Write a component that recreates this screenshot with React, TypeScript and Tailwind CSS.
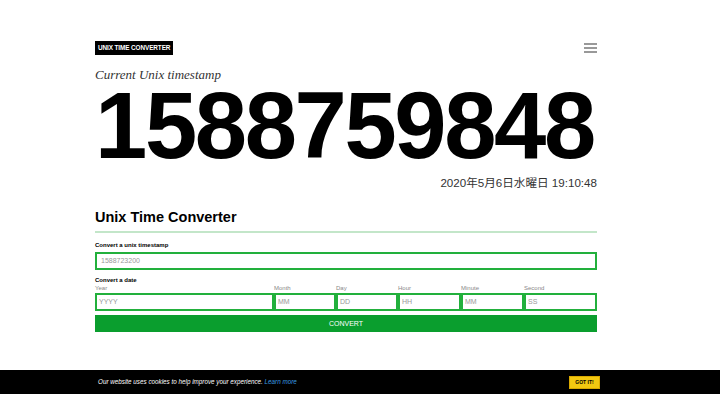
import { useState } from 'react'

const FIELDS = [
  { label: 'Year', placeholder: 'YYYY', width: 'w-[179px]' },
  { label: 'Month', placeholder: 'MM', width: 'w-[62px]' },
  { label: 'Day', placeholder: 'DD', width: 'w-[62px]' },
  { label: 'Hour', placeholder: 'HH', width: 'w-[63px]' },
  { label: 'Minute', placeholder: 'MM', width: 'w-[63px]' },
  { label: 'Second', placeholder: 'SS', width: 'flex-1' },
]

export default function App() {
  const [stamp, setStamp] = useState('')

  return (
    <div className="relative h-[394px] w-[720px] overflow-hidden bg-white font-['Liberation_Sans',Arial,sans-serif] text-black">
      <div className="ml-[95px] w-[502px] pt-[41px]">
        <header className="flex items-start justify-between">
          <div className="flex h-[14px] items-center bg-black px-[3px] text-[6.4px] font-bold leading-none tracking-[-0.1px] text-white">
            UNIX TIME CONVERTER
          </div>
          <button className="mt-[2px] flex w-[13px] flex-col gap-[2px]" aria-label="Menu">
            <span className="h-[2px] w-full bg-[#999]" />
            <span className="h-[2px] w-full bg-[#999]" />
            <span className="h-[2px] w-full bg-[#999]" />
          </button>
        </header>

        <p className="mt-[13px] font-['Liberation_Serif',serif] text-[13px] italic leading-[13px] text-[#333]">
          Current Unix timestamp
        </p>

        <div className="mt-[10px] text-[94px] font-bold leading-[70px] tracking-[-2.4px]">1588759848</div>

        <p className="mt-[16px] text-right font-['Liberation_Sans','Noto_Sans_CJK_JP',sans-serif] text-[11.6px] leading-[12px] text-[#333]">
          2020年5月6日水曜日 19:10:48
        </p>

        <h2 className="mt-[21px] text-[14.5px] font-bold leading-none">Unix Time Converter</h2>
        <div className="mt-[6px] h-[2px] bg-[#c3e6c9]" />

        <label className="mt-[9px] block text-[6px] font-bold leading-none">Convert a unix timestamp</label>
        <input
          value={stamp}
          onChange={(e) => setStamp(e.target.value)}
          placeholder="1588723200"
          className="mt-[4px] block h-[18px] w-full border-2 border-[#22b03c] px-[4px] text-[7px] outline-none placeholder:text-[#999]"
        />

        <p className="mt-[7px] text-[6px] font-bold leading-none">Convert a date</p>
        <div className="mt-[2px] flex">
          {FIELDS.map((f) => (
            <div key={f.label} className={`flex flex-col ${f.width}`}>
              <span className="text-[6px] leading-[7px] text-[#888]">{f.label}</span>
              <input
                placeholder={f.placeholder}
                className="mt-[1px] block h-[18px] w-full border-2 border-[#22b03c] px-[2px] text-[7px] outline-none placeholder:text-[#999]"
              />
            </div>
          ))}
        </div>

        <button className="mt-[4px] flex h-[17px] w-full items-center justify-center bg-[#0a9e2e] text-[7px] leading-none text-white">
          CONVERT
        </button>
      </div>

      <div className="absolute bottom-0 left-0 flex h-[24px] w-full items-center bg-black">
        <p className="ml-[98px] text-[6.3px] italic leading-none text-white">
          Our website uses cookies to help improve your experience.{' '}
          <a className="text-[#3b9ce0]">Learn more</a>
        </p>
        <button className="ml-auto mr-[120px] flex h-[13px] w-[31px] items-center justify-center border border-[#d9a900] bg-[#f2c811] text-[5px] font-bold leading-none text-black">
          GOT IT!
        </button>
      </div>
    </div>
  )
}
